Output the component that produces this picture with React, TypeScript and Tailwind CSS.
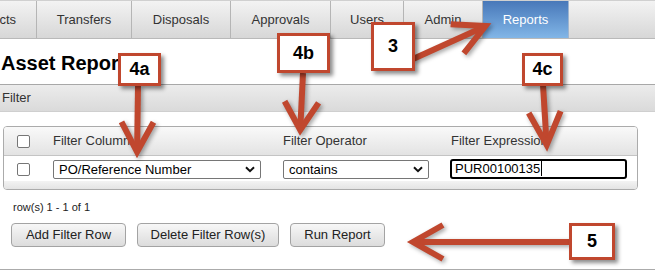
import React from 'react';

type Pt = [number, number];

const RED = '#c0472e';

const tabs = [
  { label: 'cts', w: 'w-[37px]', clip: true },
  { label: 'Transfers', w: 'w-[95px]' },
  { label: 'Disposals', w: 'w-[99px]' },
  { label: 'Approvals', w: 'w-[100px]' },
  { label: 'Users', w: 'w-[73px]' },
  { label: 'Admin', w: 'w-[79px]' },
];

// open chevron arrow used by the callouts
function Arrow({ from, to, len, half }: { from: Pt; to: Pt; len: number; half: number }) {
  const dx = to[0] - from[0];
  const dy = to[1] - from[1];
  const d = Math.hypot(dx, dy);
  const ux = dx / d;
  const uy = dy / d;
  const tx = to[0] - ux * 5;
  const ty = to[1] - uy * 5;
  const bx = to[0] - ux * len;
  const by = to[1] - uy * len;
  const a: Pt = [bx - uy * half, by + ux * half];
  const b: Pt = [bx + uy * half, by - ux * half];
  return (
    <g stroke={RED} strokeWidth={6} fill="none">
      <line x1={from[0]} y1={from[1]} x2={tx - ux * 2} y2={ty - uy * 2} />
      <polyline
        points={`${a[0]},${a[1]} ${tx},${ty} ${b[0]},${b[1]}`}
        strokeLinejoin="miter"
        strokeMiterlimit={10}
      />
    </g>
  );
}

function Callout({ text, className }: { text: string; className: string }) {
  return (
    <div
      className={`absolute flex items-center justify-center bg-white border-[3px] border-[#c0472e] shadow-[3px_3px_4px_rgba(0,0,0,0.45)] text-[18px] font-bold text-black ${className}`}
    >
      {text}
    </div>
  );
}

function Checkbox() {
  return <div className="w-[13px] h-[13px] ml-[13px] bg-white border border-[#767676] rounded-[2px]" />;
}

function Select({ value, width }: { value: string; width: string }) {
  return (
    <div
      className={`${width} h-[19px] flex items-center justify-between bg-white border border-[#767676] rounded-[2px] pl-[5px] pr-[5px] text-[13px] text-black`}
    >
      <span>{value}</span>
      <svg width="10" height="7" viewBox="0 0 10 7">
        <path d="M1 1.2 L5 5.2 L9 1.2" stroke="#111" strokeWidth="2" fill="none" />
      </svg>
    </div>
  );
}

function Button({ label, width }: { label: string; width: string }) {
  return (
    <div
      className={`${width} h-[24px] flex items-center justify-center rounded-[4px] border border-[#a3a3a3] bg-gradient-to-b from-[#f7f7f7] to-[#dcdcdc] text-[13px] text-[#222]`}
    >
      {label}
    </div>
  );
}

export default function App() {
  return (
    <div className="relative w-[655px] h-[272px] overflow-hidden bg-white font-['Liberation_Sans',Arial,sans-serif]">
      {/* tab strip */}
      <div className="flex h-[39px] border-t border-[#d0d0d0] border-b border-b-[#b9b9b9] bg-gradient-to-b from-[#f3f3f3] to-[#d7d7d7]">
        {tabs.map((t) => (
          <div
            key={t.label}
            className={`${t.w} shrink-0 flex items-center border-r border-[#b5b5b5] text-[13px] text-[#333] whitespace-nowrap ${
              t.clip ? 'justify-end pr-[20px]' : 'justify-center'
            }`}
          >
            {t.label}
          </div>
        ))}
        <div className="w-[86px] shrink-0 flex items-center justify-center border-r border-[#9fb5cf] bg-gradient-to-b from-[#4878b9] to-[#82b6e7] text-[13px] text-white">
          Reports
        </div>
      </div>

      {/* page title */}
      <div className="h-[45px] pt-[14px] pl-[1px] text-[20px] leading-[20px] font-bold text-black">Asset Report</div>

      {/* filter section header */}
      <div className="h-[28px] flex items-center pl-[2px] border-t border-[#a8a8a8] border-b border-b-[#cfcfcf] bg-gradient-to-b from-[#ececec] to-[#dadada] text-[13px] text-[#333]">
        Filter
      </div>

      {/* filter table */}
      <div className="mt-[14px] ml-[3px] w-[635px] border border-[#ababab] rounded-[4px] overflow-hidden">
        <div className="grid grid-cols-[49px_230px_167px_1fr] h-[29px] items-center border-b border-[#c4c4c4] bg-gradient-to-b from-[#f9f9f9] to-[#e3e3e3] text-[13px] text-[#333]">
          <Checkbox />
          <div>Filter Column</div>
          <div>Filter Operator</div>
          <div className="pl-[1px]">Filter Expression</div>
        </div>
        <div className="grid grid-cols-[49px_230px_167px_1fr] h-[25px] items-center bg-white pt-[2px]">
          <Checkbox />
          <Select value="PO/Reference Number" width="w-[208px]" />
          <Select value="contains" width="w-[146px]" />
          <div className="w-[177px] h-[20px] -mt-[2px] flex items-center border-2 border-black rounded-[3px] pl-[3px] text-[13px] text-black">
            PUR00100135
            <span className="ml-[1px] w-px h-[15px] bg-black" />
          </div>
        </div>
        <div className="h-[8px] bg-gradient-to-b from-[#f3f3f3] to-[#e4e4e4]" />
      </div>

      <div className="mt-[11px] pl-[13px] text-[11px] leading-[13px] text-[#222]">row(s) 1 - 1 of 1</div>

      <div className="mt-[9px] ml-[11px] flex gap-[11px]">
        <Button label="Add Filter Row" width="w-[115px]" />
        <Button label="Delete Filter Row(s)" width="w-[142px]" />
        <Button label="Run Report" width="w-[95px]" />
      </div>

      <div className="mt-[22px] border-t border-[#ababab]" />

      {/* tutorial annotations */}
      <svg
        className="absolute left-0 top-0 pointer-events-none drop-shadow-[2px_2px_2px_rgba(0,0,0,0.35)]"
        width="655"
        height="272"
      >
        <Arrow from={[138, 86]} to={[137, 157]} len={35} half={16} />
        <Arrow from={[303, 73]} to={[300, 135]} len={33} half={17} />
        <Arrow from={[413, 59]} to={[490, 24]} len={36} half={16} />
        <Arrow from={[543, 85]} to={[547, 150]} len={38} half={16} />
        <Arrow from={[569, 242]} to={[408, 242]} len={35} half={17} />
      </svg>

      <Callout text="4a" className="left-[118px] top-[53px] w-[43px] h-[33px]" />
      <Callout text="4b" className="left-[277px] top-[33px] w-[53px] h-[40px]" />
      <Callout text="3" className="left-[371px] top-[22px] w-[44px] h-[49px]" />
      <Callout text="4c" className="left-[522px] top-[53px] w-[41px] h-[33px]" />
      <Callout text="5" className="left-[569px] top-[223px] w-[46px] h-[37px]" />
    </div>
  );
}
